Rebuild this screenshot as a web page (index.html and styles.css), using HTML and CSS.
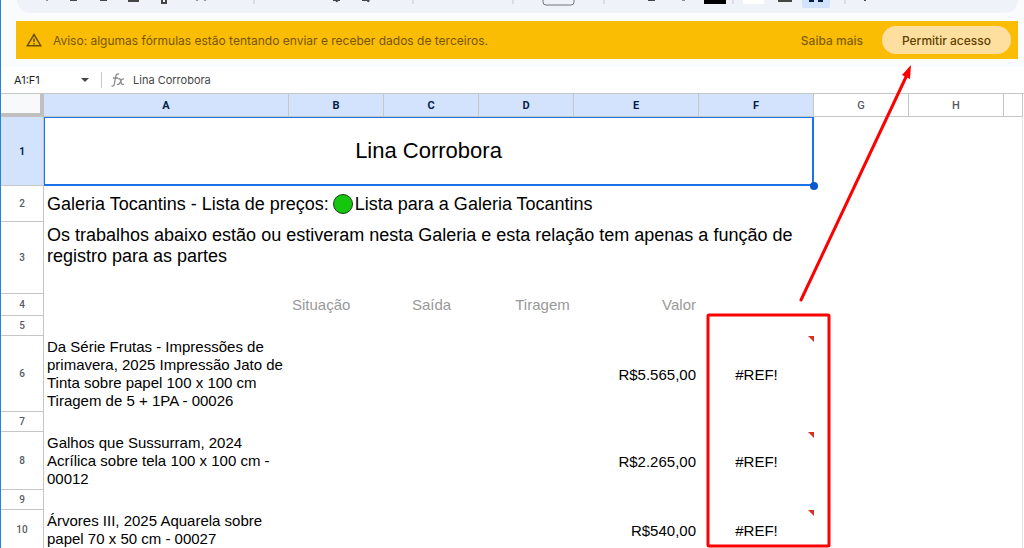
FILE: index.html
```
<!DOCTYPE html>
<html lang="pt-BR">
<head>
    <meta charset="UTF-8">
    <meta name="viewport" content="width=device-width, initial-scale=1.0">
    <title>Galeria Tocantins - Lista de preços</title>
    <link rel="stylesheet" href="styles.css">
</head>
<body>
    <div class="app">
        <header class="top">
            <div class="toolbar">
                <svg width="1001" height="13" viewBox="17 0 1001 13" fill="none" stroke="#444746" stroke-width="2">
                    <path d="M70 0h7M100 0h7M129 0v1h9v-1M162 0v3h4v-3M333 0h7M336 -1l1 3M362 0h7M369 -1l-1 3M648 0h7M864 0h2"/>
                    <path d="M46 0h2M196 0h2M204 0h2M682 0h3" stroke="#8e918f"/>
                    <path d="M254 0v4M413 0v4M513 0v4M604 0v4M733 0v4M845 0v4" stroke="#c7c7c7" stroke-width="1"/>
                    <rect x="543" y="-10" width="31" height="15" rx="3" stroke="#747775" stroke-width="1"/>
                    <path d="M704 0h22v4h-22z" fill="#000" stroke="none"/>
                    <path d="M743 0h21v4h-21z" fill="#fff" stroke="none"/>
                    <path d="M779 0v1h12v-1M785 0v1"/>
                    <path d="M802 0h28v6q0 2-2 2h-24q-2 0-2-2z" fill="#d3e3fd" stroke="none"/>
                    <path d="M810 0v1h4M822 0v1h-4" stroke="#041e49"/>
                </svg>
            </div>
            <div class="notice">
                <svg class="warning" width="16" height="14" viewBox="0 0 16 14" fill="none" stroke="#6b4e00" stroke-width="1.5">
                    <path d="M8 1.5L14.7 12.7H1.3z"/>
                    <path d="M8 5.5v3.5M8 10v1.5"/>
                </svg>
                <span class="message">Aviso: algumas fórmulas estão tentando enviar e receber dados de terceiros.</span>
                <a class="more" href="#">Saiba mais</a>
                <button class="allow" type="button">Permitir acesso</button>
            </div>
        </header>
        <div class="formula-bar">
            <button class="name-box" type="button">
                A1:F1
                <svg width="8" height="4" viewBox="0 0 8 4"><path d="M0 0h8L4 4z" fill="#444746"/></svg>
            </button>
            <svg class="fx" width="14" height="14" viewBox="0 0 14 14" fill="none" stroke="#8a8d8b" stroke-width="1.3">
                <path d="M8 1.2C6 .5 5.2 1.5 4.8 3.5L3.3 11C3 12.8 2 13.4.5 12.8M2 5h5M7 6c2-1 2.300 0 3 3s1.500 3 3 2M13 6c-2-.5-3 1-3.500 2.500S8 12 6 11.300"/>
            </svg>
            <input class="formula" type="text" value="Lina Corrobora" aria-label="Barra de fórmulas">
        </div>
        <main class="sheet">
            <table>
                <colgroup>
                    <col class="col-head">
                    <col class="col-a">
                    <col class="col-m">
                    <col class="col-m">
                    <col class="col-m">
                    <col class="col-e">
                    <col class="col-f">
                    <col class="col-m">
                    <col class="col-m">
                    <col>
                </colgroup>
                <thead>
                    <tr>
                        <td class="corner"></td>
                        <th class="on">A</th>
                        <th class="on">B</th>
                        <th class="on">C</th>
                        <th class="on">D</th>
                        <th class="on">E</th>
                        <th class="on">F</th>
                        <th>G</th>
                        <th>H</th>
                        <th></th>
                    </tr>
                </thead>
                <tbody>
                    <tr class="row-title">
                        <th class="on">1</th>
                        <td class="title" colspan="6">Lina Corrobora<span class="handle"></span></td>
                        <td class="rest" colspan="3"></td>
                    </tr>
                    <tr class="row-list">
                        <th>2</th>
                        <td class="list" colspan="6">
                            <div class="line">
                                <span>Galeria Tocantins - Lista de preços:</span>
                                <span class="dot"></span>
                                <span>Lista para a Galeria Tocantins</span>
                            </div>
                        </td>
                        <td class="rest" colspan="3"></td>
                    </tr>
                    <tr class="row-about">
                        <th>3</th>
                        <td class="about" colspan="6">Os trabalhos abaixo estão ou estiveram nesta Galeria e esta relação tem apenas a função de registro para as partes</td>
                        <td class="rest" colspan="3"></td>
                    </tr>
                    <tr class="row-labels">
                        <th>4</th>
                        <td></td>
                        <td class="label">Situação</td>
                        <td class="label center">Saída</td>
                        <td class="label center wide">Tiragem</td>
                        <td class="label right">Valor</td>
                        <td></td>
                        <td class="rest" colspan="3"></td>
                    </tr>
                    <tr class="row-gap">
                        <th>5</th>
                        <td class="rest" colspan="9"></td>
                    </tr>
                    <tr class="row-four">
                        <th>6</th>
                        <td class="work">Da Série Frutas - Impressões de primavera, 2025 Impressão Jato de Tinta sobre papel 100 x 100 cm Tiragem de 5 + 1PA - 00026</td>
                        <td colspan="3"></td>
                        <td class="price">R$5.565,00</td>
                        <td class="error">#REF!</td>
                        <td class="rest" colspan="3"></td>
                    </tr>
                    <tr class="row-gap">
                        <th>7</th>
                        <td class="rest" colspan="9"></td>
                    </tr>
                    <tr class="row-three">
                        <th>8</th>
                        <td class="work">Galhos que Sussurram, 2024 Acrílica sobre tela 100 x 100 cm - 00012</td>
                        <td colspan="3"></td>
                        <td class="price">R$2.265,00</td>
                        <td class="error">#REF!</td>
                        <td class="rest" colspan="3"></td>
                    </tr>
                    <tr class="row-gap">
                        <th>9</th>
                        <td class="rest" colspan="9"></td>
                    </tr>
                    <tr class="row-two">
                        <th>10</th>
                        <td class="work">Árvores III, 2025 Aquarela sobre papel 70 x 50 cm - 00027</td>
                        <td colspan="3"></td>
                        <td class="price">R$540,00</td>
                        <td class="error">#REF!</td>
                        <td class="rest" colspan="3"></td>
                    </tr>
                </tbody>
            </table>
        </main>
        <!-- red marks over the sheet -->
        <svg class="marks" width="1024" height="548" viewBox="0 0 1024 548" fill="none" stroke="#fe0000">
            <rect x="708" y="315" width="121" height="231" rx="1" stroke-width="3"/>
            <path d="M801 300L906 77" stroke-width="3" stroke-linecap="round"/>
            <path d="M911 65L910 79L902 75z" fill="#fe0000" stroke="none"/>
        </svg>
    </div>
</body>
</html>
```
FILE: styles.css
```
html, body {
    margin: 0;
    padding: 0;
}
body {
    overflow: hidden;
    background-color: #fff;
    color: #000;
    font-family: "Liberation Sans", Arial, sans-serif;
}
.app {
    position: relative;
    height: 100vh;
    overflow: hidden;
    box-sizing: border-box;
    border-left: 1px solid #2583d8;
}

/* toolbar and warning */
.top {
    background-color: #f9fbfd;
    padding: 0 6px 8px 15px;
}
.toolbar {
    height: 13px;
    margin: 0 0 8px 1px;
    background-color: #eff3f9;
    border-radius: 0 0 20px 20px;
    overflow: hidden;
}
.toolbar svg {
    display: block;
}
.notice {
    display: flex;
    align-items: center;
    height: 38px;
    padding: 0 7px 0 10px;
    background-color: #fbbc04;
    color: #765600;
    font-family: Inter, sans-serif;
    font-size: 12px;
}
.message {
    flex-grow: 1;
    margin-left: 11px;
}
.more {
    color: #806000;
    text-decoration: none;
    font-weight: 500;
}
.allow {
    height: 28px;
    margin-left: 19px;
    padding: 0 20px;
    border: 0;
    border-radius: 14px;
    background-color: #fedf9f;
    color: #5c4200;
    font-family: Inter, sans-serif;
    font-size: 12px;
    font-weight: 500;
}

/* formula bar */
.formula-bar {
    display: flex;
    align-items: center;
    height: 26px;
}
.name-box {
    display: flex;
    align-items: center;
    justify-content: space-between;
    width: 101px;
    height: 16px;
    padding: 0 12px 0 13px;
    border: 0;
    border-right: 1px solid #c7c7c7;
    background: none;
    color: #1f1f1f;
    font-family: Inter, sans-serif;
    font-size: 11px;
}
.fx {
    margin-left: 9px;
}
.formula {
    flex-grow: 1;
    margin-left: 8px;
    padding: 0;
    border: 0;
    outline: 0;
    color: #444746;
    font-family: Inter, sans-serif;
    font-size: 11px;
}

/* cells */
.sheet {
    padding-right: 1px;
    border-top: 1px solid #c4c7c5;
}
table {
    width: 100%;
    table-layout: fixed;
    border-collapse: separate;
    border-spacing: 0;
}
.col-head { width: 43px; }
.col-a { width: 245px; }
.col-m { width: 95px; }
.col-e { width: 125px; }
.col-f { width: 115px; }
th, td {
    box-sizing: border-box;
    padding: 0 3px;
    text-align: left;
}
th {
    border-right: 1px solid #c4c7c5;
    border-bottom: 1px solid #c4c7c5;
    color: #575b5f;
    font-family: Roboto, sans-serif;
    font-size: 10px;
    font-weight: 500;
    text-align: center;
}
th.on {
    background-color: #d3e3fd;
    color: #041e49;
    font-weight: 700;
}
thead th {
    font-size: 11px;
}
thead tr {
    height: 23px;
}
.rest {
    border-right: 1px solid #e1e3e1;
}
.corner {
    background-color: #f8f9fa;
    border-right: 4px solid #c0c0c0;
    border-bottom: 4px solid #c0c0c0;
}
.row-title { height: 69px; }
.row-list { height: 36px; }
.row-about { height: 72px; }
.row-labels { height: 22px; }
.row-gap { height: 20px; }
.row-four { height: 76px; }
.row-three { height: 58px; }
.row-two { height: 40px; }
.title {
    position: relative;
    border: 2px solid #1a73e8;
    border-top-width: 1px;
    border-left-width: 1px;
    font-size: 22px;
    text-align: center;
}
.handle {
    position: absolute;
    right: -6px;
    bottom: -6px;
    width: 8px;
    height: 8px;
    border-radius: 50%;
    background-color: #0b57d0;
}
.list, .about {
    font-size: 18px;
    line-height: 21px;
}
.about {
    padding-top: 3px;
    vertical-align: top;
}
.line {
    display: flex;
    align-items: center;
}
.dot {
    box-sizing: border-box;
    width: 20px;
    height: 20px;
    margin: 0 2px 0 4px;
    border: 1px solid #14401a;
    border-radius: 50%;
    background-color: #16c60c;
}
.label {
    color: #999;
    font-size: 15px;
    line-height: 20px;
}
.center { text-align: center; }
.wide { padding-left: 35px; }
.right { text-align: right; }
.work {
    font-size: 15px;
    line-height: 18px;
}
.price {
    font-size: 15px;
    text-align: right;
}
.error {
    position: relative;
    font-size: 15px;
    text-align: center;
}
.error::after {
    content: "";
    position: absolute;
    top: 0;
    right: 0;
    border-top: 6px solid #d93025;
    border-left: 6px solid transparent;
}
.marks {
    position: absolute;
    top: 0;
    left: -1px;
    pointer-events: none;
}
```
